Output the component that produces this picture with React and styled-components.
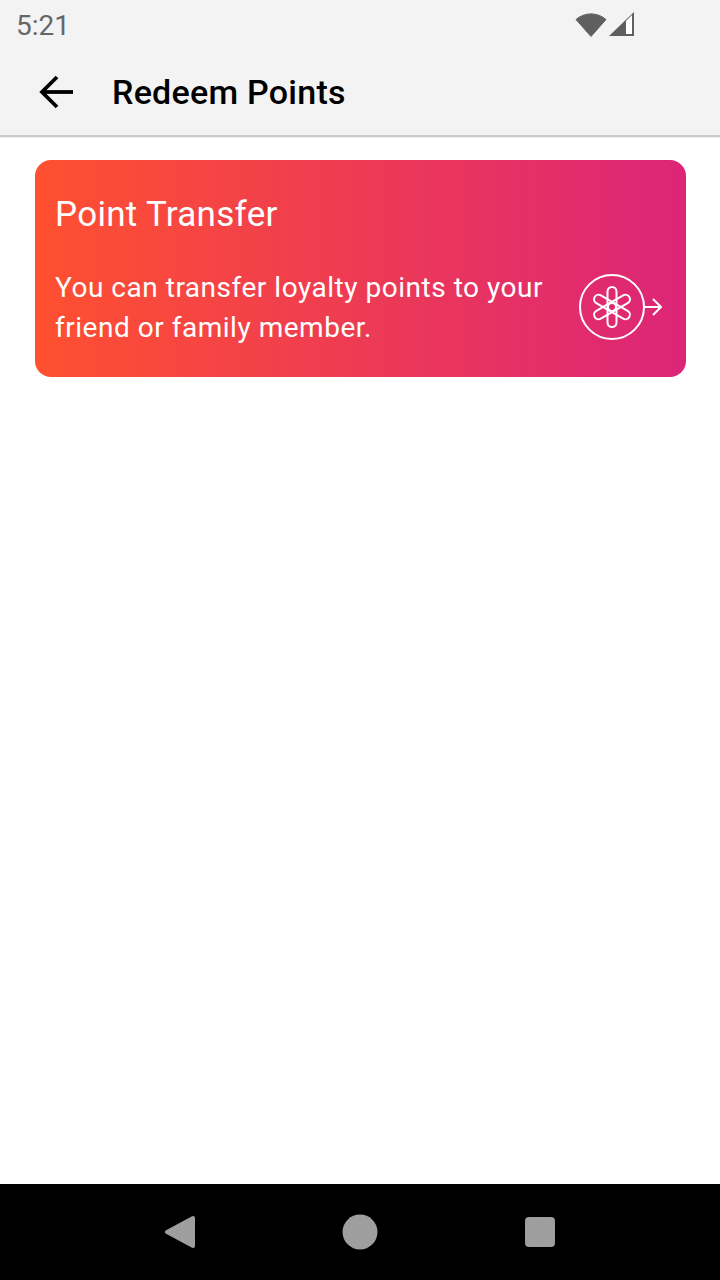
import React from 'react';
import styled, { createGlobalStyle } from 'styled-components';

const Global = createGlobalStyle`
  html, body { margin: 0; padding: 0; background: #fff; }
  body { font-family: Roboto, "Liberation Sans", sans-serif; }
`;

const Screen = styled.div`
  width: 720px;
  height: 1280px;
  display: flex;
  flex-direction: column;
  overflow: hidden;
`;

const Header = styled.header`
  background: #f3f3f3;
  height: 135px;
  border-bottom: 2px solid #c9c9c9;
  flex-shrink: 0;
  box-shadow: 0 1px 1px rgba(0, 0, 0, 0.06);
`;

const StatusBar = styled.div`
  height: 48px;
  display: flex;
  align-items: center;
  justify-content: space-between;
  padding: 3px 85px 0 16px;
  box-sizing: border-box;
  color: #666;
  font-size: 28px;
`;

const StatusIcons = styled.div`
  display: flex;
  align-items: center;
  gap: 2px;
  margin-top: -3px;
`;

const AppBar = styled.div`
  height: 87px;
  display: flex;
  align-items: center;
  padding: 0 0 0 39px;
  gap: 39px;
`;

const BackButton = styled.button`
  border: 0;
  padding: 0;
  background: none;
  display: flex;
  width: 34px;
  height: 34px;
`;

const Title = styled.h1`
  margin: 0;
  font-size: 34px;
  font-weight: 500;
  letter-spacing: 0.25px;
  color: #000;
`;

const Body = styled.main`
  flex: 1;
  padding: 23px 34px 0 35px;
`;

const Card = styled.section`
  height: 217px;
  box-sizing: border-box;
  border-radius: 16px;
  background: linear-gradient(90deg, #ff5030 0%, #dc2578 100%);
  padding: 35px 23px 0 20px;
  color: #fff;
`;

const CardTitle = styled.h2`
  margin: 0 0 33px;
  font-size: 35px;
  line-height: 40px;
  font-weight: 400;
  letter-spacing: 0.3px;
`;

const CardRow = styled.div`
  display: flex;
  align-items: center;
  justify-content: space-between;
`;

const CardText = styled.p`
  margin: 0;
  width: 510px;
  font-size: 28px;
  line-height: 40px;
  letter-spacing: 0.52px;
`;

const TransferIcon = styled.svg`
  display: block;
  margin-bottom: 2px;
`;

const NavBar = styled.nav`
  height: 96px;
  flex-shrink: 0;
  background: #000;
  display: flex;
  align-items: center;
  justify-content: center;
  gap: 147px;
`;

const NavIcon = styled.svg`
  display: block;
`;

function WifiIcon() {
  return (
    <svg width="32" height="26" viewBox="0 0 32 26">
      <path d="M1 8.5 C9.5 1 22.5 1 31 8.5 L16 25.5 Z" fill="#5f5f5f" stroke="#5f5f5f" strokeLinejoin="round" />
    </svg>
  );
}

function SignalIcon() {
  return (
    <svg width="26" height="26" viewBox="0 0 26 26">
      <path d="M0 25 L25 1 V25 Z" fill="#5f5f5f" />
      <path d="M17 10 L23 4 V23 H17 Z" fill="#fff" />
    </svg>
  );
}

export default function App() {
  return (
    <Screen>
      <Global />
      <Header>
        <StatusBar>
          <span>5:21</span>
          <StatusIcons>
            <WifiIcon />
            <SignalIcon />
          </StatusIcons>
        </StatusBar>
        <AppBar>
          <BackButton aria-label="Back">
            <svg width="34" height="34" viewBox="0 0 34 34" fill="none" stroke="#000" strokeWidth="3.8">
              <path d="M34 17 H3" />
              <path d="M18 2 L3 17 L18 32" />
            </svg>
          </BackButton>
          <Title>Redeem Points</Title>
        </AppBar>
      </Header>
      <Body>
        <Card>
          <CardTitle>Point Transfer</CardTitle>
          <CardRow>
            <CardText>You can transfer loyalty points to your friend or family member.</CardText>
            <TransferIcon width="84" height="68" viewBox="0 0 84 68" fill="none" stroke="#fff" strokeWidth="2">
              <circle cx="33" cy="34" r="32" />
              <rect x="28.5" y="14" width="9" height="40" rx="4.5" />
              <rect x="28.5" y="14" width="9" height="40" rx="4.5" transform="rotate(60 33 34)" />
              <rect x="28.5" y="14" width="9" height="40" rx="4.5" transform="rotate(-60 33 34)" />
              <circle cx="33" cy="34" r="4" />
              <path d="M65 34 H82 M74 26 L82 34 L74 42" />
            </TransferIcon>
          </CardRow>
        </Card>
      </Body>
      <NavBar>
        <NavIcon width="30" height="34" viewBox="1 0 30 34">
          <path d="M29 3 V31 L3 17 Z" fill="#9e9e9e" stroke="#9e9e9e" strokeWidth="4" strokeLinejoin="round" />
        </NavIcon>
        <NavIcon width="36" height="36" viewBox="0 0 36 36">
          <circle cx="18" cy="18" r="17.5" fill="#9e9e9e" />
        </NavIcon>
        <NavIcon width="30" height="30" viewBox="0 0 30 30">
          <rect width="30" height="30" rx="4" fill="#9e9e9e" />
        </NavIcon>
      </NavBar>
    </Screen>
  );
}
